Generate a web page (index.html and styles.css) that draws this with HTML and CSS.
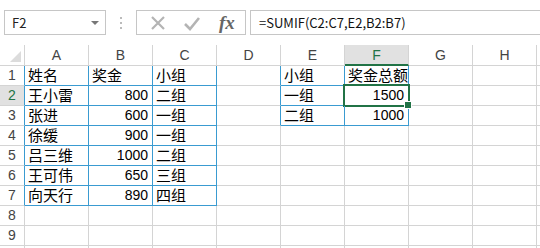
FILE: index.html
```html
<!DOCTYPE html>
<html lang="zh-CN">
<head>
  <meta charset="UTF-8">
  <title>SUMIF</title>
  <link rel="stylesheet" href="styles.css">
</head>
<body>
  <!-- Barra de fórmulas -->
  <div class="formula-bar">
    <div class="name-box">
      <span>F2</span>
      <span class="caret"></span>
    </div>
    <div class="grip">
      <i></i><i></i><i></i>
    </div>
    <div class="fx-buttons">
      <svg class="ico" width="16" height="16" viewBox="0 0 16 16">
        <path d="M2 2 L14 14 M14 2 L2 14" stroke="#b4b4b4" stroke-width="2.2" fill="none"/>
      </svg>
      <svg class="ico" width="18" height="16" viewBox="0 0 18 16">
        <path d="M2 9 L7 14 L16 3" stroke="#b4b4b4" stroke-width="2.6" fill="none"/>
      </svg>
      <span class="fx">fx</span>
    </div>
    <div class="formula-input">=SUMIF(C2:C7,E2,B2:B7)</div>
  </div>

  <!-- Planilha -->
  <div class="sheet" id="sheet"></div>

  <script>
    // a última coluna e a última linha ficam cortadas pela janela
    const cols = ['A', 'B', 'C', 'D', 'E', 'F', 'G', 'H', ''];
    const data = {
      1: ['姓名', '奖金', '小组', '', '小组', '奖金总额'],
      2: ['王小雷', 800, '二组', '', '一组', 1500],
      3: ['张进', 600, '一组', '', '二组', 1000],
      4: ['徐缓', 900, '一组'],
      5: ['吕三维', 1000, '二组'],
      6: ['王可伟', 650, '三组'],
      7: ['向天行', 890, '四组']
    };

    const sheet = document.getElementById('sheet');

    function cell(cls, text) {
      const el = document.createElement('div');
      el.className = cls;
      if (text !== undefined && text !== '') el.textContent = text;
      sheet.appendChild(el);
      return el;
    }

    // cabeçalho das colunas
    cell('corner').innerHTML = '<span class="tri"></span>';
    cols.forEach(c => cell('col-head' + (c === 'F' ? ' active' : ''), c));

    // linhas
    for (let r = 1; r <= 10; r++) {
      const rowData = data[r] || [];
      let rh = 'row-head';
      if (r === 2) rh += ' active';
      if (r <= 7) rh += ' blue-r';
      cell(rh, r < 10 ? r : '');
      cols.forEach((c, i) => {
        const v = rowData[i];
        let cls = 'cell';
        if (typeof v === 'number') cls += ' num';
        if (i <= 2 && r <= 7) cls += ' blue';
        if ((i === 4 || i === 5) && r <= 3) cls += ' blue';
        if (i === 3 && r <= 3) cls += ' blue-r';
        if (i === 5 && r === 2) cls += ' selected';
        cell(cls, v);
      });
    }
  </script>
</body>
</html>
```

FILE: styles.css
```css
/* Geral */
* {
  margin: 0;
  padding: 0;
  box-sizing: border-box;
}

body {
  width: 540px;
  height: 248px;
  overflow: hidden;
  background: #fff;
  font-family: "Noto Sans CJK SC", sans-serif;
}

/* Barra de fórmulas */
.formula-bar {
  display: flex;
  align-items: center;
  height: 45px;
  padding: 10px 0 10px 4px;
}

.name-box {
  display: flex;
  align-items: center;
  justify-content: space-between;
  width: 102px;
  height: 25px;
  border: 1px solid #c6c6c6;
  padding: 0 6px 0 7px;
  font-size: 13px;
  color: #222;
}

.caret {
  width: 0;
  height: 0;
  border-left: 4px solid transparent;
  border-right: 4px solid transparent;
  border-top: 4px solid #777;
}

.grip {
  display: flex;
  flex-direction: column;
  gap: 3px;
  width: 30px;
  align-items: center;
}

.grip i {
  width: 2px;
  height: 2px;
  background: #bbb;
}

.fx-buttons {
  display: flex;
  align-items: center;
  width: 110px;
  height: 25px;
  border: 1px solid #c6c6c6;
  padding: 0 8px 0 13px;
  gap: 17px;
}

.fx {
  margin-left: 1px;
  font-family: "Liberation Serif", serif;
  font-style: italic;
  font-weight: bold;
  font-size: 19px;
  color: #666;
  line-height: 1;
}

.formula-input {
  flex: 1;
  height: 25px;
  margin-left: 4px;
  border-top: 1px solid #c6c6c6;
  border-bottom: 1px solid #c6c6c6;
  border-left: 1px solid #c6c6c6;
  padding-left: 8px;
  font-size: 13px;
  line-height: 23px;
  color: #111;
}

/* Planilha */
.sheet {
  display: grid;
  grid-template-columns: 25px repeat(9, 64px);
  grid-template-rows: 21px repeat(10, 20px);
}

.corner,
.col-head,
.row-head,
.cell {
  border-right: 1px solid #d4d4d4;
  border-bottom: 1px solid #d4d4d4;
}

.corner {
  display: flex;
  align-items: flex-end;
  justify-content: flex-end;
  padding: 0 3px 3px 0;
}

.tri {
  width: 0;
  height: 0;
  border-left: 11px solid transparent;
  border-bottom: 11px solid #dcdcdc;
}

.col-head {
  text-align: center;
  font-family: "Liberation Sans", sans-serif;
  font-size: 14px;
  line-height: 21px;
  color: #444;
}

.col-head.active {
  background: #e1e1e1;
  color: #217346;
  border-bottom: 2px solid #217346;
  line-height: 20px;
}

.row-head {
  text-align: center;
  font-family: "Liberation Sans", sans-serif;
  font-size: 14px;
  line-height: 19px;
  color: #444;
}

.row-head.active {
  background: #e1e1e1;
  color: #217346;
}

.cell {
  position: relative;
  padding: 0 3px;
  font-size: 15px;
  line-height: 18px;
  color: #000;
  white-space: nowrap;
}

.cell.num {
  text-align: right;
  font-family: "Liberation Sans", sans-serif;
  font-size: 14px;
  line-height: 19px;
  padding-right: 4px;
}

.blue {
  border-right-color: #3a9bd1;
  border-bottom-color: #3a9bd1;
}

.blue-r {
  border-right-color: #3a9bd1;
}

/* Célula selecionada */
.selected::after {
  content: "";
  position: absolute;
  left: -2px;
  top: -2px;
  right: -2px;
  bottom: -2px;
  border: 2px solid #217346;
}

.selected::before {
  content: "";
  position: absolute;
  right: -4px;
  bottom: -4px;
  width: 6px;
  height: 6px;
  background: #217346;
  border: 1px solid #fff;
  z-index: 1;
}
```
